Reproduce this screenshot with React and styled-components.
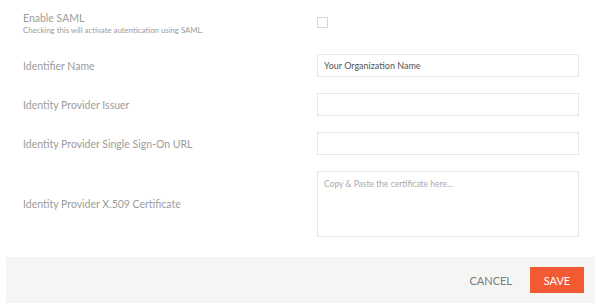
import React from "react";
import styled, { createGlobalStyle } from "styled-components";

const Global = createGlobalStyle`
body{
  margin:0;
  background:#fff;
  font-family:Lato, "Open Sans", sans-serif;
}
`
const Page = styled.div`
width:600px;
height:306px;
box-sizing:border-box;
padding-top:7px;
`
const Form = styled.div`
padding-left:23px;
`
const Row = styled.div`
display:grid;
grid-template-columns:294px 262px;
align-items:center;
min-height:${p => p.tall ? "31px" : "23px"};
margin-bottom:16px;
`
const LabelBox = styled.div`
display:flex;
flex-direction:column;
`
const Label = styled.label`
font-size:10.5px;
line-height:14px;
color:#9c9c9c;
`
const Hint = styled.span`
font-size:7.8px;
line-height:10px;
color:#9c9c9c;
`
const Check = styled.span`
display:block;
width:9px;
height:9px;
border:1px solid #d6d6d6;
background:#fff;
`
const Input = styled.input`
box-sizing:border-box;
width:262px;
height:23px;
border:1px solid #e6e6e6;
padding:0 6px;
font-family:Lato, sans-serif;
font-size:9px;
color:#555;
outline:none;
`
const Area = styled.textarea`
box-sizing:border-box;
width:262px;
height:66px;
border:1px solid #e6e6e6;
padding:7px 6px;
font-family:Lato, sans-serif;
font-size:8.5px;
color:#555;
resize:none;
outline:none;
&::placeholder{ color:#aaa; }
`
const Footer = styled.div`
margin:20px 5px 0 6px;
height:46px;
background:#f5f5f3;
display:flex;
align-items:center;
justify-content:flex-end;
padding-right:11px;
gap:18px;
`
const Cancel = styled.button`
border:none;
background:none;
padding:0;
font-family:Lato, sans-serif;
font-size:11px;
color:#7a7a80;
text-transform:uppercase;
`
const Save = styled.button`
width:54px;
height:26px;
border:none;
background:#f15a32;
color:#fff;
font-family:Lato, sans-serif;
font-size:11px;
text-transform:uppercase;
`

export default function App(){
  return (<>
  <Global />
  <Page>
    <Form>
      <Row tall>
        <LabelBox>
          <Label>Enable SAML</Label>
          <Hint>Checking this will activate autentication using SAML.</Hint>
        </LabelBox>
        <Check />
      </Row>
      <Row>
        <Label>Identifier Name</Label>
        <Input defaultValue="Your Organization Name" />
      </Row>
      <Row>
        <Label>Identity Provider Issuer</Label>
        <Input />
      </Row>
      <Row>
        <Label>Identity Provider Single Sign-On URL</Label>
        <Input />
      </Row>
      <Row>
        <Label>Identity Provider X.509 Certificate</Label>
        <Area placeholder="Copy & Paste the certificate here..." />
      </Row>
    </Form>
    <Footer>
      <Cancel>Cancel</Cancel>
      <Save>Save</Save>
    </Footer>
  </Page>
  </>)
}
